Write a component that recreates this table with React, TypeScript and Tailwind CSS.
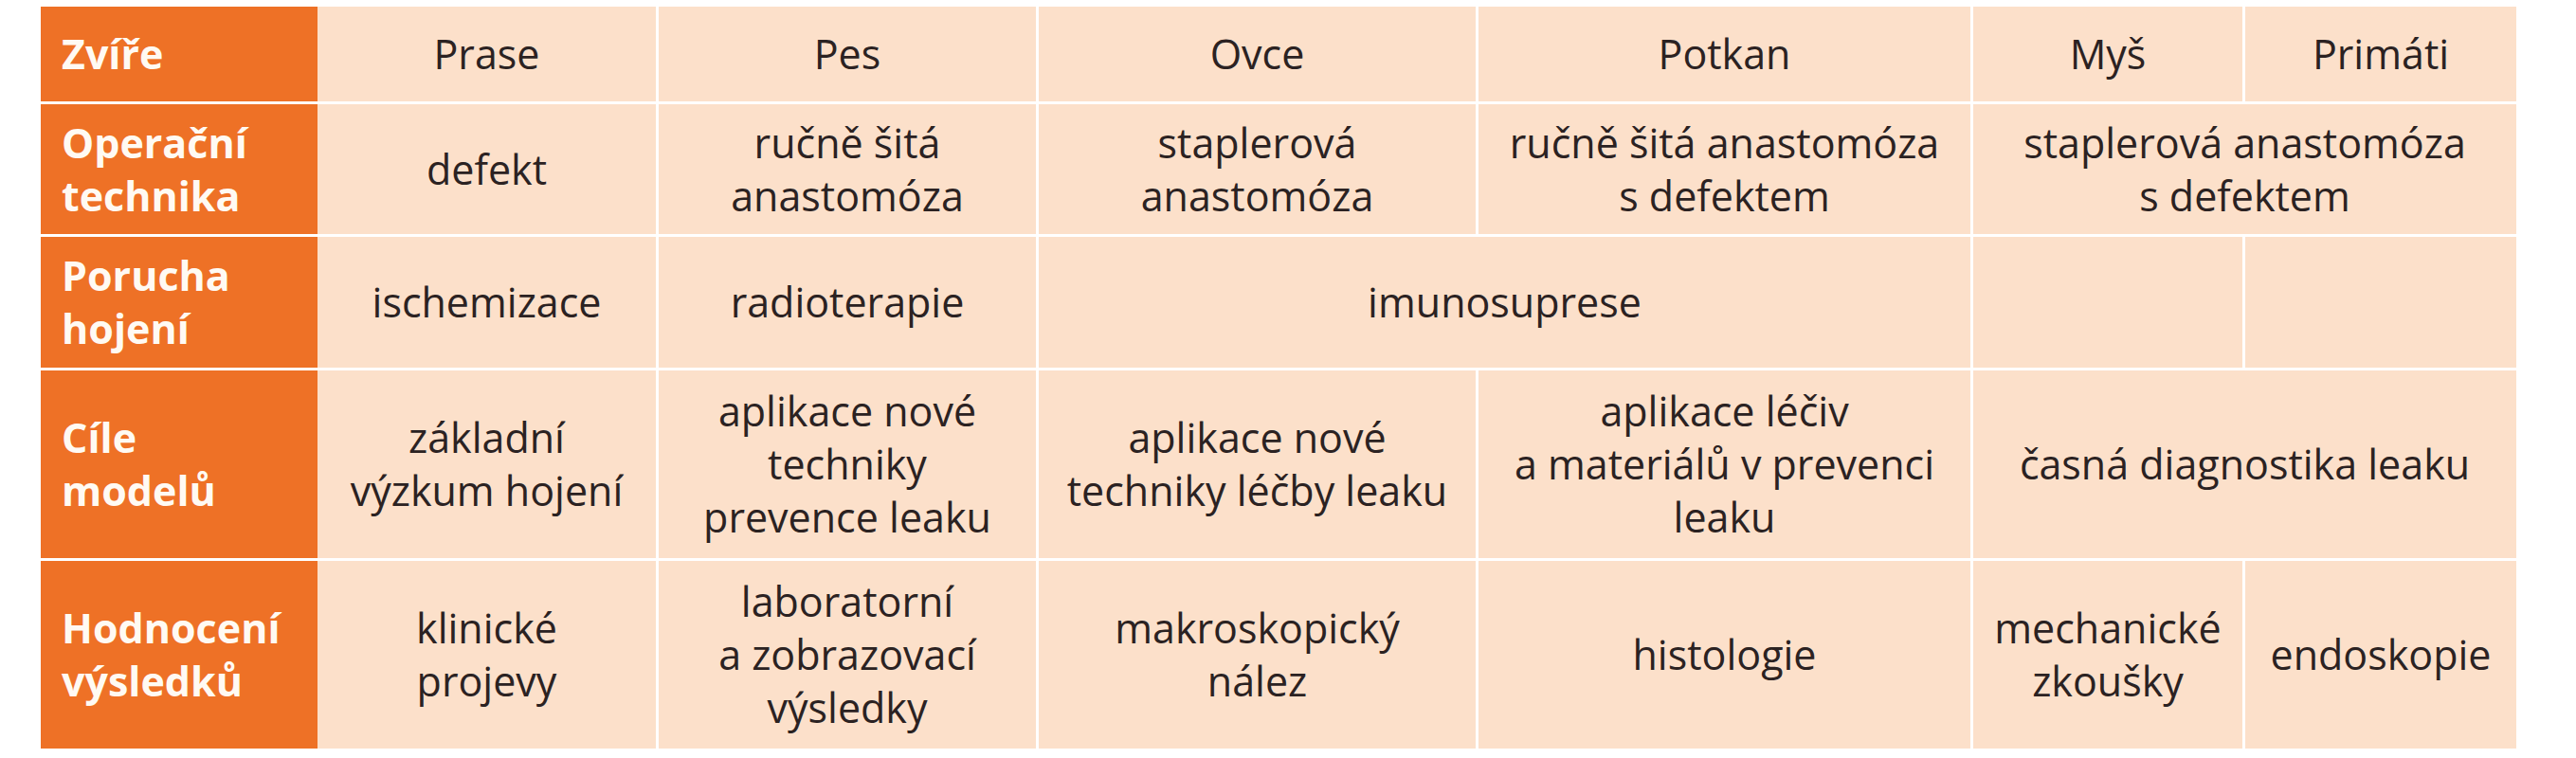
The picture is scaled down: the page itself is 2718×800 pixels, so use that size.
import * as React from "react";

// Tabulka zvířecích modelů leaku anastomózy. Levý sloupec = oranžové popisky
// řádků, zbytek broskvové buňky oddělené bílými linkami. Sloučené buňky mají
// `span` (počet sloupců), řádky textu jsou zalomené ručně jako v předloze.

type Cell = { lines: string[]; span?: number };
type Row = { label: string[]; cells: Cell[] };

const t = (...lines: string[]): Cell => ({ lines });

const rows: Row[] = [
  {
    label: ["Zvíře"],
    cells: [t("Prase"), t("Pes"), t("Ovce"), t("Potkan"), t("Myš"), t("Primáti")],
  },
  {
    label: ["Operační", "technika"],
    cells: [
      t("defekt"),
      t("ručně šitá", "anastomóza"),
      t("staplerová", "anastomóza"),
      t("ručně šitá anastomóza", "s defektem"),
      { lines: ["staplerová anastomóza", "s defektem"], span: 2 },
    ],
  },
  {
    label: ["Porucha", "hojení"],
    cells: [
      t("ischemizace"),
      t("radioterapie"),
      { lines: ["imunosuprese"], span: 2 },
      t(),
      t(),
    ],
  },
  {
    label: ["Cíle", "modelů"],
    cells: [
      t("základní", "výzkum hojení"),
      t("aplikace nové", "techniky", "prevence leaku"),
      t("aplikace nové", "techniky léčby leaku"),
      t("aplikace léčiv", "a materiálů v prevenci", "leaku"),
      { lines: ["časná diagnostika leaku"], span: 2 },
    ],
  },
  {
    label: ["Hodnocení", "výsledků"],
    cells: [
      t("klinické", "projevy"),
      t("laboratorní", "a zobrazovací", "výsledky"),
      t("makroskopický", "nález"),
      t("histologie"),
      t("mechanické", "zkoušky"),
      t("endoskopie"),
    ],
  },
];

const spanClass: Record<number, string> = { 1: "col-span-1", 2: "col-span-2" };

// Ruční zalomení: jeden textový blok, řádky oddělené <br />.
const lines = (ls: string[]) =>
  ls.map((l, i) => (
    <React.Fragment key={i}>
      {i > 0 && <br />}
      {l}
    </React.Fragment>
  ));

export default function App() {
  return (
    <div
      className="w-[2718px] h-[800px] bg-white pt-[7px] pl-[43px]"
      style={{ fontFamily: '"Open Sans", "Noto Sans", sans-serif' }}
    >
      <div className="grid w-[2612px] grid-cols-[292px_357px_401px_464px_522px_287px_289px] grid-rows-[100px_137px_138px_198px_198px] gap-y-[3px] bg-white">
        {rows.map((r, ri) => (
          <React.Fragment key={ri}>
            <div className="flex items-center bg-[#ee7126] pl-[22px] text-[43px] font-bold leading-[56px] text-[#fffaf3]">
              <p>{lines(r.label)}</p>
            </div>
            {r.cells.map((c, ci) => (
              <div
                key={ci}
                className={
                  "flex items-center justify-center bg-[#fce0ca] text-center text-[43px] leading-[56px] text-[#2b2222] " +
                  spanClass[c.span ?? 1] +
                  (ci === 0 ? "" : " border-l-[3px] border-white")
                }
              >
                {c.lines.length > 0 && <p className="whitespace-nowrap">{lines(c.lines)}</p>}
              </div>
            ))}
          </React.Fragment>
        ))}
      </div>
    </div>
  );
}
